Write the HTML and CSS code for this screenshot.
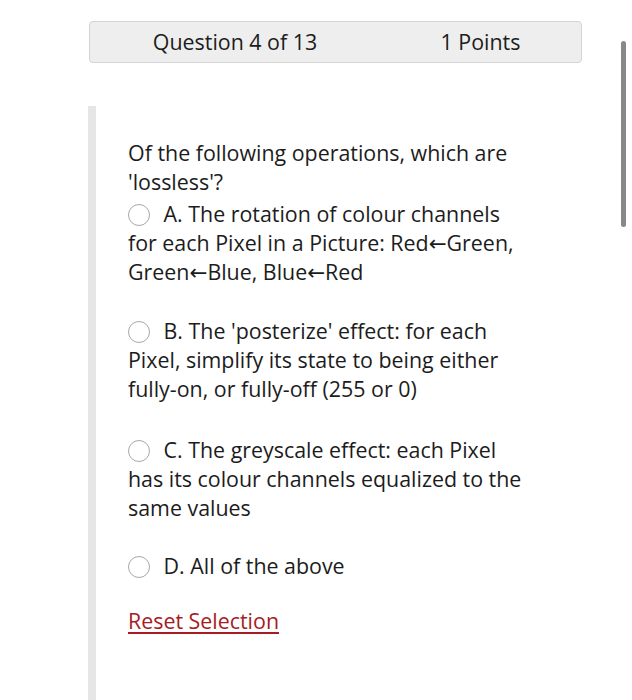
FILE: index.html
```html
<!DOCTYPE html>
<html lang="en">
<head>
    <meta charset="UTF-8">
    <meta name="viewport" content="width=device-width, initial-scale=1.0">
    <title>Question 4 of 13</title>
    <link rel="stylesheet" href="styles.css">
</head>
<body>
    <div class="page">
        <div class="question-header">
            <div class="q-number">Question 4 of 13</div>
            <div class="q-points">1 Points</div>
        </div>

        <!-- Question body -->
        <div class="question-panel">
            <p class="question-text">Of the following operations, which are 'lossless'?</p>

            <label class="option">
                <span class="radio"></span>
                A. The rotation of colour channels for each Pixel in a Picture: Red<span class="arrow">&larr;</span>Green, Green<span class="arrow">&larr;</span>Blue, Blue<span class="arrow">&larr;</span>Red
            </label>

            <label class="option">
                <span class="radio"></span>
                B. The 'posterize' effect: for each Pixel, simplify its state to being either fully-on, or fully-off (255 or 0)
            </label>

            <label class="option">
                <span class="radio"></span>
                C. The greyscale effect: each Pixel has its colour channels equalized to the same values
            </label>

            <label class="option">
                <span class="radio"></span>
                D. All of the above
            </label>

            <a href="#" class="reset-link">Reset Selection</a>
        </div>
    </div>

    <div class="scrollbar"></div>
</body>
</html>
```

FILE: styles.css
```css
* {
    margin: 0;
    padding: 0;
    box-sizing: border-box;
}

body {
    background: white;
    font-family: 'Open Sans', sans-serif;
    color: #1c1c1c;
    height: 700px;
    overflow: hidden;
}

.page {
    padding: 21px 0 0 88px;
    width: 582px;
}

.question-header {
    display: grid;
    grid-template-columns: 290px 1fr;
    margin-left: 1px;
    height: 42px;
    padding-bottom: 2px;
    align-items: center;
    background: #eeeeee;
    border: 1px solid #d4d4d4;
    border-radius: 4px;
    font-size: 21.4px;
    text-align: center;
}

.question-panel {
    margin-top: 43px;
    border-left: 8px solid #e6e6e6;
    padding: 32px 57px 80px 32px;
    height: 594px;
    font-size: 21.4px;
    line-height: 29px;
}

.question-text {
    margin-bottom: 3px;
}

.option {
    display: block;
    margin-bottom: 30px;
}

.option:nth-of-type(2) {
    margin-bottom: 32px;
}

.option:nth-of-type(3) {
    margin-bottom: 29px;
}

.option:nth-of-type(4) {
    margin-bottom: 26px;
}

.radio {
    display: inline-block;
    width: 22px;
    height: 22px;
    border: 1.5px solid #a8a8a8;
    border-radius: 50%;
    vertical-align: -4px;
    margin-right: 8px;
}

.arrow {
    font-family: 'DejaVu Sans', sans-serif;
    line-height: 0;
}

.reset-link {
    color: #a51c24;
    text-decoration: underline;
    text-underline-offset: 3px;
}

.scrollbar {
    position: absolute;
    left: 621px;
    top: 41px;
    width: 5px;
    height: 186px;
    background: #888;
    border-radius: 3px;
}
```
